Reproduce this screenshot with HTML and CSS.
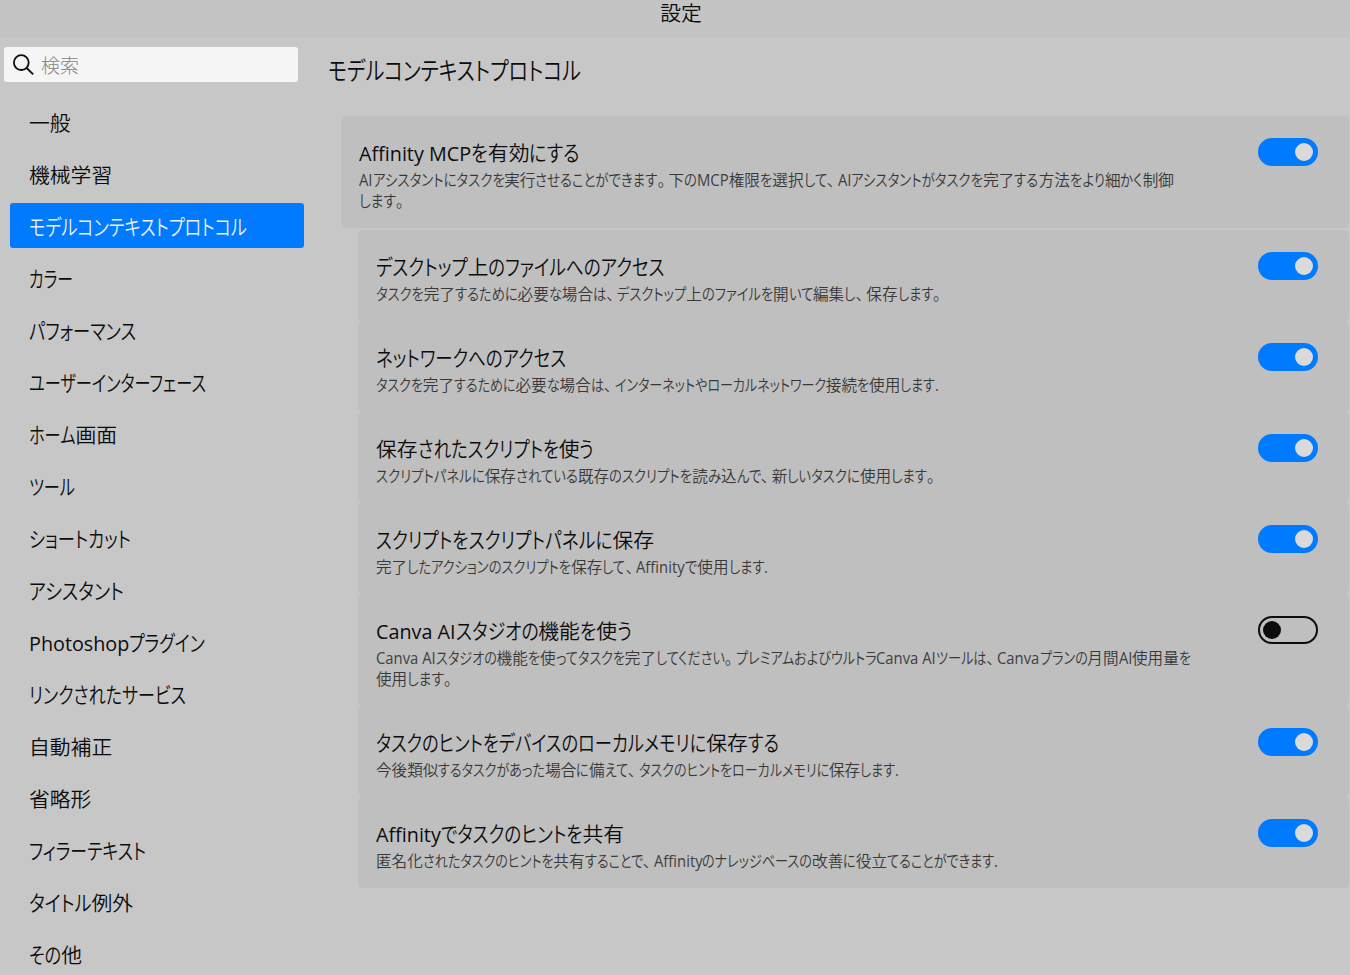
FILE: index.html
```html
<!DOCTYPE html>
<html lang="ja">

<head>
    <meta charset="utf-8">
    <title>設定</title>
    <link rel="stylesheet" href="styles.css">
</head>

<body>
    <header class="titlebar">設定</header>
    <div class="window">
        <aside class="sidebar">
            <div class="search">
                <svg class="search-icon" viewBox="0 0 22 22" width="22" height="22">
                    <circle cx="8.3" cy="8.6" r="7.4" />
                    <path d="M13.6 14L20.2 20.4" />
                </svg>
                <span>検索</span>
            </div>
            <nav class="menu">
                <a class="item">一般</a>
                <a class="item">機械学習</a>
                <a class="item active"><span data-width="218">モデルコンテキストプロトコル</span></a>
                <a class="item"><span data-width="44">カラー</span></a>
                <a class="item"><span data-width="107">パフォーマンス</span></a>
                <a class="item"><span data-width="177">ユーザーインターフェース</span></a>
                <a class="item"><span data-width="88">ホーム画面</span></a>
                <a class="item"><span data-width="46">ツール</span></a>
                <a class="item"><span data-width="102">ショートカット</span></a>
                <a class="item"><span data-width="95">アシスタント</span></a>
                <a class="item"><span data-width="176">Photoshopプラグイン</span></a>
                <a class="item"><span data-width="157">リンクされたサービス</span></a>
                <a class="item">自動補正</a>
                <a class="item">省略形</a>
                <a class="item"><span data-width="117">フィラーテキスト</span></a>
                <a class="item"><span data-width="104">タイトル例外</span></a>
                <a class="item"><span data-width="53">その他</span></a>
            </nav>
        </aside>

        <main class="content">
            <h1><span data-width="253">モデルコンテキストプロトコル</span></h1>

            <section class="card main-card">
                <div class="text">
                    <h2><span data-width="221">Affinity MCPを有効にする</span></h2>
                    <p><span data-width="815">AIアシスタントにタスクを実行させることができます。下のMCP権限を選択して、AIアシスタントがタスクを完了する方法をより細かく制御</span><br><span data-width="48">します。</span></p>
                </div>
                <div class="toggle on"></div>
            </section>

            <div class="sub-cards">
                <section class="card">
                    <div class="text">
                        <h2><span data-width="289">デスクトップ上のファイルへのアクセス</span></h2>
                        <p><span data-width="568">タスクを完了するために必要な場合は、デスクトップ上のファイルを開いて編集し、保存します。</span></p>
                    </div>
                    <div class="toggle on"></div>
                </section>
                <section class="card">
                    <div class="text">
                        <h2><span data-width="190">ネットワークへのアクセス</span></h2>
                        <p><span data-width="563">タスクを完了するために必要な場合は、インターネットやローカルネットワーク接続を使用します.</span></p>
                    </div>
                    <div class="toggle on"></div>
                </section>
                <section class="card">
                    <div class="text">
                        <h2><span data-width="218">保存されたスクリプトを使う</span></h2>
                        <p><span data-width="562">スクリプトパネルに保存されている既存のスクリプトを読み込んで、新しいタスクに使用します。</span></p>
                    </div>
                    <div class="toggle on"></div>
                </section>
                <section class="card">
                    <div class="text">
                        <h2><span data-width="278">スクリプトをスクリプトパネルに保存</span></h2>
                        <p><span data-width="392">完了したアクションのスクリプトを保存して、Affinityで使用します.</span></p>
                    </div>
                    <div class="toggle on"></div>
                </section>
                <section class="card">
                    <div class="text">
                        <h2><span data-width="256">Canva AIスタジオの機能を使う</span></h2>
                        <p><span data-width="815">Canva AIスタジオの機能を使ってタスクを完了してください。プレミアムおよびウルトラCanva AIツールは、Canvaプランの月間AI使用量を</span><br><span data-width="79">使用します。</span></p>
                    </div>
                    <div class="toggle"></div>
                </section>
                <section class="card">
                    <div class="text">
                        <h2><span data-width="403">タスクのヒントをデバイスのローカルメモリに保存する</span></h2>
                        <p><span data-width="523">今後類似するタスクがあった場合に備えて、タスクのヒントをローカルメモリに保存します.</span></p>
                    </div>
                    <div class="toggle on"></div>
                </section>
                <section class="card">
                    <div class="text">
                        <h2><span data-width="248">Affinityでタスクのヒントを共有</span></h2>
                        <p><span data-width="622">匿名化されたタスクのヒントを共有することで、Affinityのナレッジベースの改善に役立てることができます.</span></p>
                    </div>
                    <div class="toggle on"></div>
                </section>
            </div>
        </main>
    </div>

    <script src="script.js"></script>
</body>

</html>
```

FILE: styles.css
```css
* {
    box-sizing: border-box;
}

body {
    margin: 0;
    height: 975px;
    overflow: hidden;
    background-color: #c7c7c7;
    color: #0c0c0c;
    font-family: "Open Sans", "Noto Sans CJK JP", sans-serif;
    font-size: 20.8px;
    font-weight: 350;
}

.titlebar {
    height: 38px;
    padding-left: 12px;
    background-color: #c4c4c4;
    line-height: 27px;
    text-align: center;
}

.window {
    display: flex;
}

.sidebar {
    width: 328px;
    padding: 9px 24px 0 4px;
    flex-shrink: 0;
}

.search {
    display: flex;
    align-items: center;
    gap: 6px;
    width: 294px;
    height: 35px;
    padding-left: 9px;
    border-radius: 3px;
    background-color: #f5f5f5;
    color: #858585;
    font-size: 19px;
    font-weight: 300;
}

.search-icon {
    fill: none;
    stroke: #0c0c0c;
    stroke-width: 1.8;
}

.menu {
    display: flex;
    flex-direction: column;
    gap: 7px;
    padding: 17px 0 0 6px;
}

.item {
    width: 294px;
    height: 45px;
    padding-left: 19px;
    border-radius: 3px;
    line-height: 49px;
    white-space: nowrap;
}

.item.active {
    background-color: #007aff;
    color: #f0f0f0;
}

.content {
    flex-grow: 1;
    padding-right: 1px;
}

h1 {
    margin: 0;
    height: 78px;
    font-size: 24.2px;
    font-weight: 350;
    line-height: 66px;
}

.card {
    display: flex;
    justify-content: space-between;
    padding: 22px 31px 16px 18px;
    border-radius: 5px;
    background-color: #bfbfbf;
}

.main-card {
    margin: 0 0 2px 13px;
}

.sub-cards {
    margin-left: 30px;
}

.text {
    padding-top: 1px;
    white-space: nowrap;
}

h2 {
    margin: 0 0 3px;
    height: 28px;
    font-size: 20.8px;
    font-weight: 350;
    line-height: 28px;
}

p {
    margin: 0;
    color: #383838;
    font-size: 15.6px;
    line-height: 21px;
}

p [data-width] {
    display: inline-block;
    height: 21px;
    vertical-align: top;
}

/* kana and latin runs are set narrower than kanji */
.kana,
.latin {
    display: inline-block;
    transform-origin: 0 50%;
    white-space: pre;
}

.kana {
    font-feature-settings: "palt" 1;
}

.latin {
    font-weight: 400;
}

p .latin {
    color: #404040;
}

.mark {
    display: inline-block;
    width: .7em;
    font-feature-settings: "halt" 1;
}

.toggle {
    display: flex;
    align-items: center;
    width: 60px;
    height: 28px;
    padding: 0 3px;
    border: 2px solid #0c0c0c;
    border-radius: 14px;
    flex-shrink: 0;
}

.toggle::before {
    content: "";
    width: 18px;
    height: 18px;
    border-radius: 50%;
    background-color: #0c0c0c;
}

.toggle.on {
    justify-content: flex-end;
    border-color: #007aff;
    background-color: #007aff;
}

.toggle.on::before {
    background-color: #dadada;
}
```

FILE: script.js
```js
const LATIN_SCALE = 0.95
const KANA_STRETCH = 1.04

const kinds = [
    ["kana", /^[\u3040-\u30ff]+$/],
    ["mark", /^[、。]$/],
    ["latin", /^[A-Za-z. ]+$/]
]

function scaleRun(run, x, y) {
    const width = run.getBoundingClientRect().width
    run.style.width = `${width * x}px`
    run.style.transform = `scale(${x}, ${y})`
}

document.querySelectorAll("[data-width]").forEach(label => {
    const parts = label.textContent.match(/[\u3040-\u30ff]+|[、。]|[A-Za-z. ]+|[^\u3040-\u30ff、。A-Za-z. ]+/g)
    label.textContent = ""

    parts.forEach(part => {
        const run = document.createElement("span")
        const kind = kinds.find(([, pattern]) => pattern.test(part))
        run.className = kind ? kind[0] : "kanji"
        run.textContent = part
        label.append(run)
    })

    label.querySelectorAll(".latin").forEach(run => scaleRun(run, LATIN_SCALE, 1))

    // whatever the other runs leave free goes to the kana
    const kana = [...label.querySelectorAll(".kana")]
    const kanaWidth = kana.reduce((sum, run) => sum + run.getBoundingClientRect().width, 0)
    const total = label.getBoundingClientRect().width
    const scale = (label.dataset.width - (total - kanaWidth)) / kanaWidth
    kana.forEach(run => scaleRun(run, scale, KANA_STRETCH))
})
```
